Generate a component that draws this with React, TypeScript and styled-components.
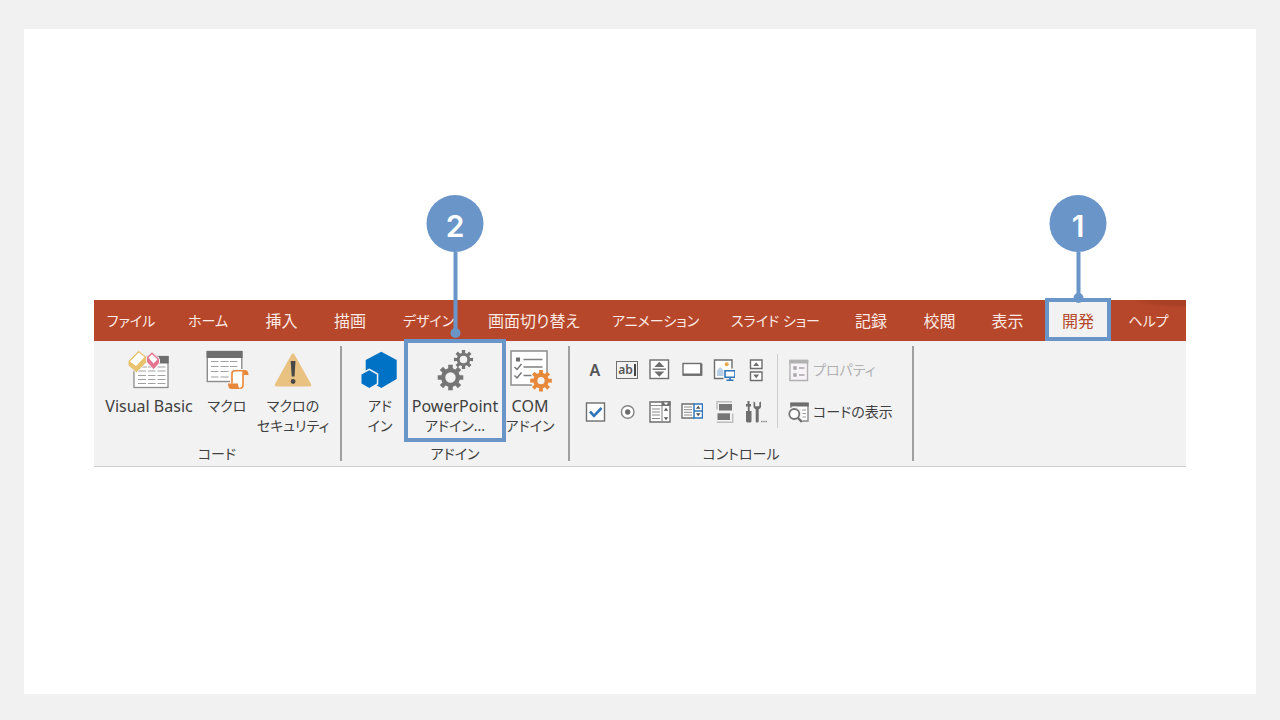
import React from "react";
import styled, { createGlobalStyle } from "styled-components";

const color = {
  page: "#f1f1f1",
  ribbon: "#f2f2f2",
  brand: "#b7472a",
  callout: "#6a95c9",
  text: "#404040",
  icon: "#6e6e6e",
  disabled: "#b1b1b1",
  line: "#a0a0a0",
  blue: "#2f75b9",
  orange: "#e8883a",
};

const GlobalStyle = createGlobalStyle`
  *, *::before, *::after { box-sizing: border-box; }
  body {
    margin: 0;
    background: ${color.page};
    color: ${color.text};
    font-family: "Noto Sans", "Noto Sans CJK JP", sans-serif;
    font-size: 16px;
    line-height: 20px;
    font-feature-settings: "palt";
  }
  button {
    margin: 0;
    padding: 0;
    border: 0;
    background: none;
    color: inherit;
    font: inherit;
    font-feature-settings: inherit;
    white-space: nowrap;
    cursor: pointer;
  }
  svg { display: block; }
`;

const Page = styled.div`
  min-height: 100vh;
  padding: 29px 24px 26px;
  display: flex;
`;

const Card = styled.main`
  flex: 1;
  background: #fff;
  padding: 271px 70px 0;
`;

const Ribbon = styled.section`
  display: flex;
  flex-direction: column;
`;

const TabBar = styled.div`
  display: flex;
  height: 41px;
  background:
    radial-gradient(ellipse 56px 8px at 100% 0, #a84026 60%, transparent) no-repeat,
    ${color.brand};
  color: #fbeae5;
`;

const Tab = styled.button<{ $grow: number; $selected?: boolean }>`
  position: relative;
  flex: ${(p) => p.$grow} 1 0;
  min-width: 0;
  margin-left: ${(p) => (p.$selected ? 3 : 0)}px;
  display: flex;
  align-items: center;
  justify-content: center;
  font-size: 16px;
  background: ${(p) => (p.$selected ? color.ribbon : "transparent")};
  color: ${(p) => (p.$selected ? color.brand : "inherit")};
`;

const KanaText = styled.span`
  font-size: 14px;
`;

const Body = styled.div`
  display: flex;
  height: 126px;
  padding-top: 5px;
  background: ${color.ribbon};
  border-bottom: 1px solid #cfcfcf;
`;

const Group = styled.section<{ $width: number }>`
  flex: 0 0 ${(p) => p.$width}px;
  height: 115px;
  display: flex;
  flex-direction: column;
  justify-content: space-between;
  border-right: 2px solid ${color.line};
`;

const GroupTitle = styled.h2`
  margin: 0;
  font-size: 14px;
  font-weight: 400;
  line-height: 14px;
  text-align: center;
`;

const LargeButtons = styled.div<{ $indent?: number }>`
  display: flex;
  padding-left: ${(p) => p.$indent ?? 0}px;
`;

const LargeButton = styled.button<{ $width: number }>`
  position: relative;
  width: ${(p) => p.$width}px;
  height: 92px;
  display: flex;
  flex-direction: column;
  align-items: center;
`;

const LargeIcon = styled.span`
  height: 50px;
  padding-bottom: 2px;
  display: flex;
  align-items: center;
`;

const Latin = styled.span`
  font-size: 16px;
`;

const Controls = styled.div`
  display: flex;
  align-items: center;
  padding: 8px 0 0 13px;
`;

const Toolbox = styled.div`
  display: grid;
  grid-template-columns: repeat(6, 32px);
  row-gap: 18px;
`;

const Tool = styled.button`
  width: 24px;
  height: 24px;
  display: flex;
  align-items: center;
  justify-content: center;
  color: #555;
`;

const LetterTool = styled.span`
  font-size: 16px;
  font-weight: 600;
`;

const FieldTool = styled.span`
  width: 22px;
  height: 18px;
  display: flex;
  align-items: center;
  justify-content: center;
  border: 1px solid ${color.icon};
  font-size: 12px;
  font-weight: 600;
  line-height: 14px;

  &::after {
    content: "";
    width: 2px;
    height: 12px;
    margin-left: 1px;
    background: #444;
  }
`;

const Commands = styled.div`
  display: flex;
  flex-direction: column;
  gap: 18px;
  margin-left: 2px;
  padding-left: 9px;
  border-left: 1px solid #cccccc;
  padding-top: 4px;
  padding-bottom: 4px;
`;

const Command = styled.button`
  display: flex;
  align-items: center;
  gap: 2px;
  height: 24px;
  font-size: 14px;

  &:disabled {
    color: ${color.disabled};
    cursor: default;
  }
`;

const Highlight = styled.span<{ $kind: "tab" | "button" }>`
  position: absolute;
  z-index: 1;
  inset: ${(p) => (p.$kind === "tab" ? "-2px 0 0" : "-7px 0 -4px")};
  border: 4px solid ${color.callout};
  pointer-events: none;
`;

const Callout = styled.span<{ $stem: number; $lift: number }>`
  position: absolute;
  z-index: 2;
  left: 50%;
  bottom: calc(100% + ${(p) => p.$lift}px);
  transform: translateX(-50%);
  display: flex;
  flex-direction: column;
  align-items: center;
  pointer-events: none;

  &::before {
    content: "";
    order: 1;
    width: 4px;
    height: ${(p) => p.$stem}px;
    background: ${color.callout};
  }

  &::after {
    content: "";
    order: 2;
    width: 10px;
    height: 10px;
    margin-top: -5px;
    border-radius: 50%;
    background: ${color.callout};
  }
`;

const CalloutNumber = styled.span`
  width: 57px;
  height: 57px;
  padding-top: 4px;
  display: flex;
  align-items: center;
  justify-content: center;
  border-radius: 50%;
  background: ${color.callout};
  color: #fff;
  font-family: Inter, "Liberation Sans", sans-serif;
  font-size: 30px;
  font-weight: 600;
`;

function gearPath(cx: number, cy: number, outer: number, inner: number, hole: number) {
  const teeth = 8;
  const points: string[] = [];
  for (let i = 0; i < teeth; i++) {
    const a = (i * 2 * Math.PI) / teeth - Math.PI / 2;
    const steps: [number, number][] = [
      [-0.24, inner],
      [-0.18, outer],
      [0.18, outer],
      [0.24, inner],
    ];
    for (const [d, r] of steps) {
      points.push(`${(cx + r * Math.cos(a + d)).toFixed(2)} ${(cy + r * Math.sin(a + d)).toFixed(2)}`);
    }
  }
  return `M${points.join("L")}ZM${cx - hole} ${cy}a${hole} ${hole} 0 1 0 ${hole * 2} 0a${hole} ${hole} 0 1 0 ${-hole * 2} 0Z`;
}

const VisualBasicIcon = () => (
  <svg width="42" height="40" viewBox="0 0 42 40" fill="none">
    <rect x="6" y="6.500" width="34" height="31" fill="#fff" stroke="#8c8c8c" strokeWidth="1.300" />
    <path d="M31 6h9.600v7.500H31z" fill={color.icon} />
    <path d="M10 17h9M20 17h7.500M29.500 17h8M10 21h8M20 21h7.500M29.500 21h8M10 25.500h8M20 25.500h7.500M29.500 25.500h8M10 29.500h8M20 29.500h7.500M29.500 29.500h8M10 33.500h8M20 33.500h7.500M29.500 33.500h8" stroke="#a0a0a0" />
    <path d="M10.500.3 18.500 6.500V12.500L8.500 22.700 0 15.500V11z" fill="#e9c26e" stroke={color.ribbon} />
    <path d="M10.800 2.500 16.500 7 8 16 2 11.500z" fill="#fff" />
    <path d="M24 1.700 31.500 9V13L25.700 19.500 18.500 12V7z" fill="#e4748f" stroke={color.ribbon} />
    <path d="M24 4.300 29.500 9.500 25.500 13.500 20.500 7.700z" fill="#fff" />
  </svg>
);

const MacroIcon = () => (
  <svg width="43" height="40" viewBox="0 0 43 40" fill="none">
    <rect x="1.300" y="1.500" width="34.500" height="30" fill="#fff" stroke="#8c8c8c" strokeWidth="1.400" />
    <path d="M.6 1h36v7h-36z" fill={color.icon} />
    <path d="M5 11.500h7.500M14.500 11.500h8M24 11.500h7.500M5 16.500h7.500M14.500 16.500h8M24 16.500h7.500M5 21.500h7.500M14.500 21.500h8M24 21.500h7.500M5 27h7.500M14.500 27h8" stroke="#a0a0a0" strokeWidth="1.200" />
    <path d="M24 32.500V22.500c0-2 1.500-3.500 3.500-3.500H39c2.500 0 4 1.500 4 4v3h-2v9.500c0 2.500-1.500 4.500-4 4.500H25c-2.500 0-3.500-2-3.500-7.500z" fill={color.ribbon} />
    <path d="M26 33.500V23.500c0-1.700 1-2.800 2.700-2.800h9.300c-.8.7-1 1.500-1 2.700V35c0 2-.8 3.300-2.800 3.300" fill="#fff" stroke={color.orange} strokeWidth="1.600" />
    <path d="M38 20c3 0 4.500 1.200 4.500 5H37.500v-2c0-1.500 0-2.500.5-3zM22 33.500h10c0 3 1 5 3 5.500H25.500c-2.500 0-3.500-2-3.500-5.500z" fill={color.orange} />
  </svg>
);

const SecurityIcon = () => (
  <svg width="38" height="34" viewBox="0 0 38 34">
    <path d="M17.500 1.500c.8-1.400 2.200-1.400 3 0L37 31c.7 1.300 0 2.500-1.500 2.500h-33C1 33.500.3 32.300 1 31z" fill="#e9c281" />
    <path d="M16.700 8h4.800l-1 15.500h-2.800z" fill="#484848" />
    <circle cx="19.100" cy="28.500" r="2.400" fill="#484848" />
  </svg>
);

const AddInIcon = () => (
  <svg width="38" height="38" viewBox="0 0 38 38">
    <path d="M20.300.7 35.700 9v19L20.300 37 4.700 28V9z" fill="#0072c6" />
    <path d="m8.300 17.500 9 5v11l-9 5-9-5v-11z" fill={color.ribbon} />
    <path d="m8.300 19.300 7.500 4.300v9l-7.500 4.300L.5 32.600v-9z" fill="#0072c6" />
  </svg>
);

const GearsIcon = () => (
  <svg width="40" height="42" viewBox="0 0 40 42" fill="#757575" fillRule="evenodd">
    <path d={gearPath(15.500, 28.500, 13, 9.500, 5.200)} />
    <path d={gearPath(28.500, 10.500, 9.700, 6.800, 3.800)} />
  </svg>
);

const ComIcon = () => (
  <svg width="43" height="43" viewBox="0 0 43 43" fill="none">
    <rect x="2" y="2" width="36" height="34" fill="#fff" stroke="#8c8c8c" strokeWidth="1.500" />
    <path d="M7 8.500h4v4H7z" fill={color.icon} />
    <path d="M14.500 10.500h19M14.500 18h19M14.500 26.500h8" stroke="#808080" strokeWidth="1.300" />
    <path d="m5.500 18 2.500 2.500 4.500-5.500M5.500 26.500 8 29l4.500-5.500" stroke="#757575" strokeWidth="1.500" />
    <circle cx="32" cy="31.700" r="10" fill={color.ribbon} />
    <path d={gearPath(32, 31.700, 11, 7.800, 3.600)} fill={color.orange} fillRule="evenodd" />
  </svg>
);

const SmallIcon = ({ children }: { children: React.ReactNode }) => (
  <svg width="24" height="24" viewBox="0 0 24 24" fill="none" stroke={color.icon} strokeWidth="1.400" aria-hidden="true">
    {children}
  </svg>
);

const SpinIcon = () => (
  <SmallIcon>
    <rect x="3" y="2" width="18.500" height="18.500" fill="#fff" />
    <path d="M5.500 11.200h13.500" />
    <path d="M12.300 3.800 17.300 9H7.300zM12.300 18.800l5-5.200H7.300z" fill={color.icon} stroke="none" />
  </SmallIcon>
);

const ButtonIcon = () => (
  <SmallIcon>
    <rect x="4" y="5.500" width="18" height="11.500" fill="#fff" />
    <path d="M4 16.700h18.300V5.500" strokeWidth="2.200" />
  </SmallIcon>
);

const ImageIcon = () => (
  <SmallIcon>
    <path d="M12.500 20.500H3.500v-18.500h17.500v8.500" fill="#fff" />
    <path d="M6 18v-5.500l3.200-3.500 3.300 3.500V18z" fill="#b9cfe8" stroke="none" />
    <circle cx="15.700" cy="6.300" r="2" fill="#eaa850" stroke="none" />
    <path d="M14 12.800h10v6.500H14zM19 19.500v3M15.500 22.300h7" fill="#fff" stroke={color.blue} strokeWidth="1.600" />
  </SmallIcon>
);

const ScrollIcon = () => (
  <SmallIcon>
    <path d="M7.500 2h11.500v8.500H7.500zM7.500 14h11.500v8.500H7.500z" fill="#fff" />
    <path d="M13.200 4.200 16.200 8h-6zM13.200 20.300l3-3.800h-6z" fill={color.icon} stroke="none" />
  </SmallIcon>
);

const CheckIcon = () => (
  <SmallIcon>
    <rect x="3.500" y="3" width="18" height="18" fill="#fff" />
    <path d="m7 11.500 4 4.300L18.500 8" stroke={color.blue} strokeWidth="2.600" />
  </SmallIcon>
);

const RadioIcon = () => (
  <SmallIcon>
    <circle cx="12.700" cy="12" r="6.300" fill="#fff" stroke="#858585" />
    <circle cx="12.700" cy="12" r="2.700" fill={color.icon} stroke="none" />
  </SmallIcon>
);

const ListIcon = () => (
  <SmallIcon>
    <path d="M3 2h20v20H3z" fill="#fff" />
    <path d="M3 5.500h20M15 5.500v16.500M5 9h8M5 12h8M5 15h8M5 18.500h8" strokeWidth="1.100" stroke="#888" />
    <path d="M14.500 1.300h9v4.400h-9z" fill={color.icon} stroke="none" />
    <path d="m16.500 2.500 2.500 2.500 2.500-2.500z" fill="#fff" stroke="none" />
    <path d="m19 7.700 2.200 3h-4.400zM19 20.300l2.200-3h-4.400z" fill="#555" stroke="none" />
  </SmallIcon>
);

const ComboIcon = () => (
  <SmallIcon>
    <path d="M15 18H3V4h12" fill="#fff" />
    <path d="M5 7h8M5 9.700h8M5 12.300h8M5 15h8" strokeWidth="1" stroke="#888" />
    <path d="M15 4h8.500v14H15zM15 11h8.500" fill="#fff" stroke={color.blue} strokeWidth="1.500" />
    <path d="m19.200 5.800 2.300 3h-4.600zM19.200 16.300l2.300-3h-4.600z" fill="#555" stroke="none" />
  </SmallIcon>
);

const ToggleIcon = () => (
  <SmallIcon>
    <path d="M6 9.500V1.700h15" stroke="#bdbdbd" />
    <path d="M8 4h13v6.500H8z" fill="#757575" stroke="none" />
    <path d="M5.700 22.300h16V13.500" stroke="#bdbdbd" />
    <path d="M6.500 13.300h12.500v6.700H6.500z" fill="#757575" stroke="none" />
  </SmallIcon>
);

const ToolsIcon = () => (
  <SmallIcon>
    <path d="M4.500 1h2v3h1.500v2.500H6.700V11H8.500v10.500l-1 1H4l-1-1V11h1.800V6.500H3V4h1.500z" fill={color.icon} stroke="none" />
    <path d="M10.500 1.500v4.700c0 1.600 1 2.600 2.200 3V21c0 1 .7 1.500 1.500 1.500s1.500-.5 1.500-1.500V9.200c1.300-.4 2.300-1.400 2.300-3V1.500l-1.700 1v3.700h-4.100V2.500z" fill={color.icon} stroke="none" />
    <path d="M18 21.500h1.500M20.300 21.500h1.500M22.600 21.500H24" stroke="#888" />
  </SmallIcon>
);

const PropertiesIcon = () => (
  <SmallIcon>
    <path d="M3 2.500h17.500v20H3z" fill="#f8f3f8" stroke={color.disabled} />
    <path d="M2.300 1.800h19v3.700h-19z" fill={color.disabled} stroke="none" />
    <path d="M12 10h5.500M12 17h5.500" stroke="#a5a5a5" />
    <path d="M7 9h2v2H7zM7 16h2v2H7z" stroke="#a5a5a5" strokeWidth="1.400" />
  </SmallIcon>
);

const ViewCodeIcon = () => (
  <SmallIcon>
    <path d="M4 8V3.500h17V21h-5.500" fill="#fff" stroke="#888" />
    <path d="M3.300 2.500h18.400v4H3.300z" fill={color.icon} stroke="none" />
    <path d="M15 10h4M15.500 13.500h3.500M15.500 17H19" stroke="#999" strokeWidth="1.200" />
    <circle cx="8" cy="13.500" r="7" fill={color.ribbon} stroke="none" />
    <circle cx="7.300" cy="14" r="5" fill="#fff" stroke="#757575" strokeWidth="1.800" />
    <path d="m11 18 4 4" strokeWidth="2.400" />
  </SmallIcon>
);

const tabs = [
  { label: "ファイル", grow: 74, kana: true },
  { label: "ホーム", grow: 80, kana: true },
  { label: "挿入", grow: 67 },
  { label: "描画", grow: 70 },
  { label: "デザイン", grow: 87, kana: true },
  { label: "画面切り替え", grow: 124 },
  { label: "アニメーション", grow: 119, kana: true },
  { label: "スライド ショー", grow: 121, kana: true },
  { label: "記録", grow: 70 },
  { label: "校閲", grow: 67 },
  { label: "表示", grow: 69 },
  { label: "開発", grow: 66, selected: true },
  { label: "ヘルプ", grow: 75, kana: true },
];

const tools = [
  { name: "ラベル", icon: <LetterTool>A</LetterTool> },
  { name: "テキスト ボックス", icon: <FieldTool>ab</FieldTool> },
  { name: "スピン ボタン", icon: <SpinIcon /> },
  { name: "コマンド ボタン", icon: <ButtonIcon /> },
  { name: "イメージ", icon: <ImageIcon /> },
  { name: "スクロール バー", icon: <ScrollIcon /> },
  { name: "チェック ボックス", icon: <CheckIcon /> },
  { name: "オプション ボタン", icon: <RadioIcon /> },
  { name: "リスト ボックス", icon: <ListIcon /> },
  { name: "コンボ ボックス", icon: <ComboIcon /> },
  { name: "トグル ボタン", icon: <ToggleIcon /> },
  { name: "その他のコントロール", icon: <ToolsIcon /> },
];

export default function App() {
  return (
    <>
      <GlobalStyle />
      <Page>
        <Card>
          <Ribbon>
            <TabBar role="tablist">
              {tabs.map((tab) => (
                <Tab key={tab.label} role="tab" aria-selected={!!tab.selected} $grow={tab.grow} $selected={tab.selected}>
                  {tab.kana ? <KanaText>{tab.label}</KanaText> : tab.label}
                  {tab.selected && (
                    <>
                      <Highlight $kind="tab" />
                      <Callout $stem={46} $lift={-3}>
                        <CalloutNumber>1</CalloutNumber>
                      </Callout>
                    </>
                  )}
                </Tab>
              ))}
            </TabBar>
            <Body>
              <Group $width={248}>
                <LargeButtons>
                  <LargeButton $width={110}>
                    <LargeIcon><VisualBasicIcon /></LargeIcon>
                    <Latin>Visual Basic</Latin>
                  </LargeButton>
                  <LargeButton $width={46}>
                    <LargeIcon><MacroIcon /></LargeIcon>
                    <KanaText>マクロ</KanaText>
                  </LargeButton>
                  <LargeButton $width={86}>
                    <LargeIcon><SecurityIcon /></LargeIcon>
                    <KanaText>マクロの</KanaText>
                    <KanaText>セキュリティ</KanaText>
                  </LargeButton>
                </LargeButtons>
                <GroupTitle>コード</GroupTitle>
              </Group>
              <Group $width={228}>
                <LargeButtons $indent={14}>
                  <LargeButton $width={48}>
                    <LargeIcon><AddInIcon /></LargeIcon>
                    <KanaText>アド</KanaText>
                    <KanaText>イン</KanaText>
                  </LargeButton>
                  <LargeButton $width={102}>
                    <LargeIcon><GearsIcon /></LargeIcon>
                    <Latin>PowerPoint</Latin>
                    <KanaText>アドイン...</KanaText>
                    <Highlight $kind="button" />
                    <Callout $stem={81} $lift={8}>
                      <CalloutNumber>2</CalloutNumber>
                    </Callout>
                  </LargeButton>
                  <LargeButton $width={48}>
                    <LargeIcon><ComIcon /></LargeIcon>
                    <Latin>COM</Latin>
                    <KanaText>アドイン</KanaText>
                  </LargeButton>
                </LargeButtons>
                <GroupTitle>アドイン</GroupTitle>
              </Group>
              <Group $width={344}>
                <Controls>
                  <Toolbox>
                    {tools.map((tool) => (
                      <Tool key={tool.name} aria-label={tool.name}>
                        {tool.icon}
                      </Tool>
                    ))}
                  </Toolbox>
                  <Commands>
                    <Command disabled>
                      <PropertiesIcon />
                      プロパティ
                    </Command>
                    <Command>
                      <ViewCodeIcon />
                      コードの表示
                    </Command>
                  </Commands>
                </Controls>
                <GroupTitle>コントロール</GroupTitle>
              </Group>
            </Body>
          </Ribbon>
        </Card>
      </Page>
    </>
  );
}
